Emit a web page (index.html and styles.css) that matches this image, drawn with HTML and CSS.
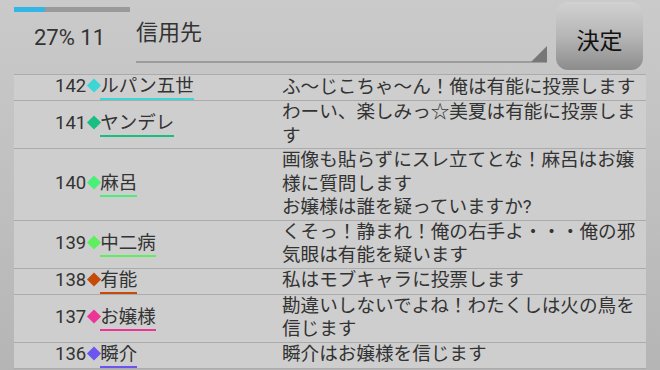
FILE: index.html
```html
<!DOCTYPE html>
<html lang="ja">
<head>
  <meta charset="UTF-8">
  <meta name="viewport" content="width=device-width, initial-scale=1.0">
  <title>投票</title>
  <link rel="stylesheet" href="styles.css">
</head>
<body>
  <div class="header">
    <div class="status">
      <div class="progress"><div class="progress-fill" style="width: 27%"></div></div>
      <div class="status-text">27% 11</div>
    </div>
    <div class="spinner">信用先</div>
    <button class="decide">決定</button>
  </div>

  <div class="log">
    <div class="row">
      <div class="who"><span class="num">142</span><span class="mark c-cyan"></span><span class="name c-cyan">ルパン五世</span></div>
      <div class="msg">ふ～じこちゃ～ん！俺は有能に投票します</div>
    </div>
    <div class="row">
      <div class="who"><span class="num">141</span><span class="mark c-teal"></span><span class="name c-teal">ヤンデレ</span></div>
      <div class="msg">わーい、楽しみっ☆美夏は有能に投票します</div>
    </div>
    <div class="row">
      <div class="who"><span class="num">140</span><span class="mark c-green"></span><span class="name c-green">麻呂</span></div>
      <div class="msg">画像も貼らずにスレ立てとな！麻呂はお嬢様に質問します<br>お嬢様は誰を疑っていますか?</div>
    </div>
    <div class="row">
      <div class="who"><span class="num">139</span><span class="mark c-lime"></span><span class="name c-lime">中二病</span></div>
      <div class="msg">くそっ！静まれ！俺の右手よ・・・俺の邪気眼は有能を疑います</div>
    </div>
    <div class="row">
      <div class="who"><span class="num">138</span><span class="mark c-rust"></span><span class="name c-rust">有能</span></div>
      <div class="msg">私はモブキャラに投票します</div>
    </div>
    <div class="row">
      <div class="who"><span class="num">137</span><span class="mark c-pink"></span><span class="name c-pink">お嬢様</span></div>
      <div class="msg">勘違いしないでよね！わたくしは火の鳥を信じます</div>
    </div>
    <div class="row">
      <div class="who"><span class="num">136</span><span class="mark c-violet"></span><span class="name c-violet">瞬介</span></div>
      <div class="msg">瞬介はお嬢様を信じます</div>
    </div>
  </div>
</body>
</html>
```

FILE: styles.css
```css
html, body {
  margin: 0;
  height: 100%;
}

body {
  width: 660px;
  height: 370px;
  overflow: hidden;
  font-family: Roboto, "Noto Sans CJK JP", sans-serif;
  color: #333;
  background: linear-gradient(#cacaca, #c2c2c2 40%, #b5b5b5);
}

.header {
  display: flex;
  align-items: flex-start;
  height: 74px;
  padding-left: 14px;
}

.status {
  width: 116px;
}

.progress {
  margin-top: 7px;
  height: 5px;
  background: #9a9a9a;
}

.progress-fill {
  height: 100%;
  background: #33b5e5;
}

.status-text {
  margin-top: 13px;
  padding-left: 20px;
  font-size: 22px;
  line-height: 26px;
  color: #333;
}

.spinner {
  position: relative;
  width: 411px;
  margin-left: 6px;
  padding: 20px 0 15px;
  font-size: 22px;
  line-height: 26px;
  border-bottom: 2px solid #9c9c9c;
}

.spinner::after {
  content: "";
  position: absolute;
  right: 0;
  bottom: -1px;
  width: 16px;
  height: 16px;
  background: #777;
  clip-path: polygon(100% 0, 100% 100%, 0 100%);
}

.decide {
  width: 87px;
  height: 68px;
  margin: 2px 0 0 9px;
  padding: 5px 0 0;
  border: none;
  border-radius: 12px;
  background: linear-gradient(#d1d1d1, #b6b6b6 50%, #8c8c8c);
  font-family: "Noto Sans CJK JP", sans-serif;
  font-size: 23px;
  color: #111;
}

.log {
  width: 632px;
  margin-left: 14px;
  background: #cecece;
  border-top: 1px solid #ababab;
}

.row {
  display: grid;
  grid-template-columns: 268px 1fr;
  align-items: center;
  min-height: 25px;
  border-bottom: 1px solid #ababab;
}

.who {
  display: flex;
  align-items: baseline;
  padding-left: 41px;
}

.num {
  font-size: 18.5px;
  line-height: 22px;
}

.mark {
  width: 10px;
  height: 10px;
  margin: 0 1px 0 3px;
  transform: translateY(-1.5px) rotate(45deg);
}

.name {
  font-size: 18.5px;
  line-height: 22px;
  padding-bottom: 1px;
  border-bottom: 2px solid;
}

.msg {
  font-size: 18.6px;
  line-height: 23.5px;
}

.c-cyan { color: #333; border-color: #3dd6d6; }
.c-teal { color: #333; border-color: #19bf80; }
.c-green { color: #333; border-color: #48f07a; }
.c-lime { color: #333; border-color: #5eee5e; }
.c-rust { color: #333; border-color: #c44c08; }
.c-pink { color: #333; border-color: #ec3597; }
.c-violet { color: #333; border-color: #6a55ee; }

.mark.c-cyan { background: #3dd6d6; }
.mark.c-teal { background: #19bf80; }
.mark.c-green { background: #48f07a; }
.mark.c-lime { background: #5eee5e; }
.mark.c-rust { background: #c44c08; }
.mark.c-pink { background: #ec3597; }
.mark.c-violet { background: #6a55ee; }
```
